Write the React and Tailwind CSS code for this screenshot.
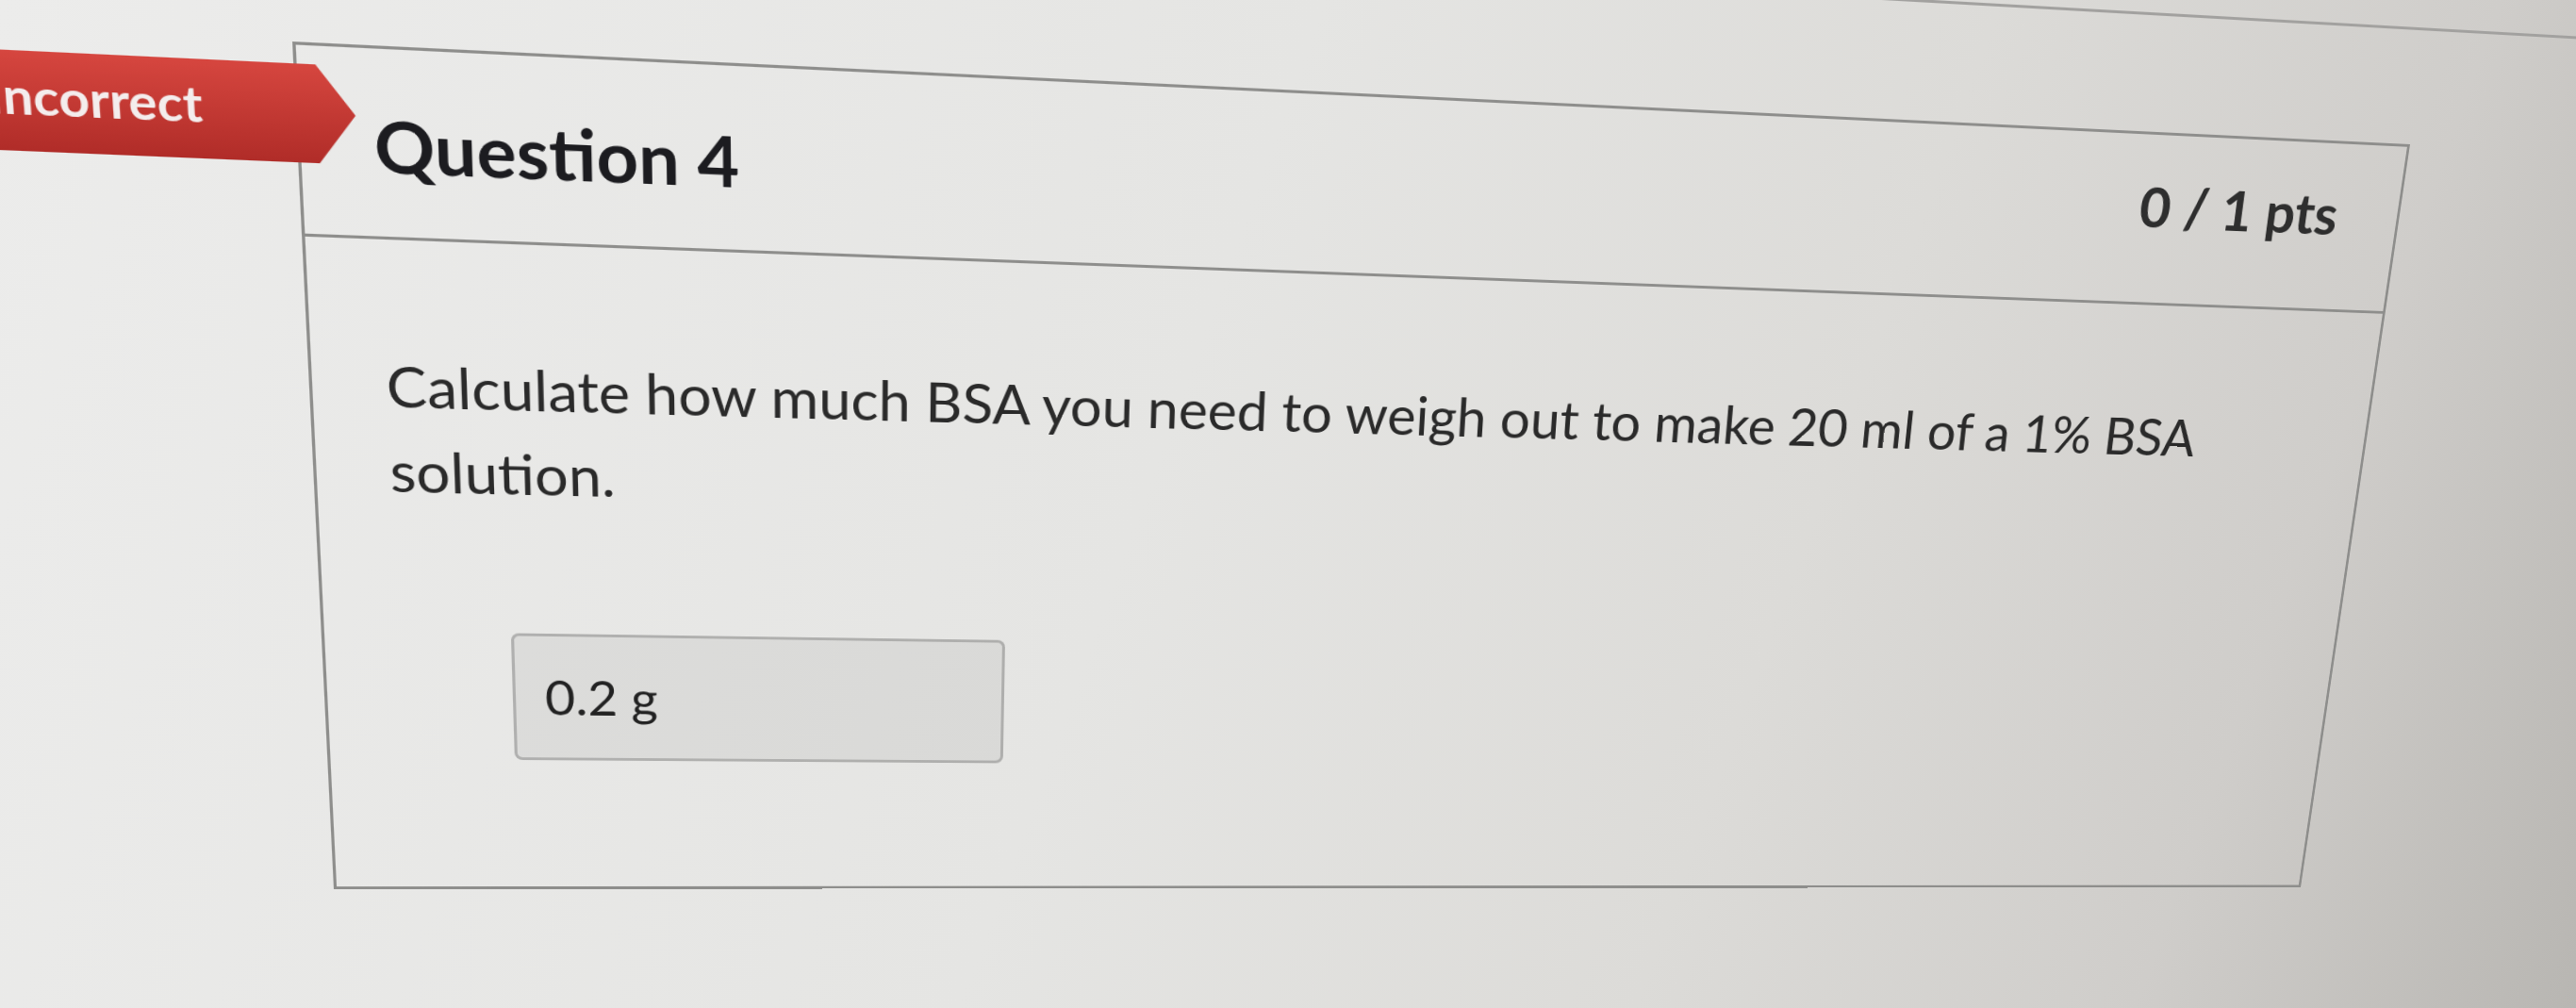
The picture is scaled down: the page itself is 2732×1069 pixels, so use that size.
// Quiz result card for a single question, seen through a phone camera
// (the whole sheet is projected with a matrix3d so it sits at the same angle).

const question = {
  number: 4,
  score: '0 / 1 pts',
  status: 'Incorrect',
  text: 'Calculate how much BSA you need to weigh out to make 20 ml of a 1% BSA solution.',
  answer: '0.2 g',
};

function StatusFlag({ label }) {
  return (
    <div className="absolute left-[-423px] top-[18px] flex h-[96px] w-[475px] items-center justify-end bg-gradient-to-b from-[#d6463f] to-[#b02c28] pb-[10px] pr-[140px] [clip-path:polygon(0_0,calc(100%_-_35px)_0,100%_50%,calc(100%_-_35px)_100%,0_100%)]">
      <span className="text-[48px] font-bold leading-[1.2] text-[#f4eded]">{label}</span>
    </div>
  );
}

function QuestionCard({ q }) {
  return (
    <div className="relative h-[880px] w-[2200px] border-[3px] border-[#8e8e8c]">
      <StatusFlag label={q.status} />

      <div className="flex h-[187px] items-start justify-between border-b-[3px] border-[#8e8e8c] pl-[68px] pr-[70px]">
        <h2 className="mt-[52px] text-[70px] font-bold leading-[1.2] text-[#1c1c20]">Question {q.number}</h2>
        <div className="mt-[40px] text-[62px] font-bold leading-[1.2] text-[#2e2e2e]">{q.score}</div>
      </div>

      <div className="px-[70px] pt-[104px]">
        <p className="text-[58px] leading-[88px] text-[#2a2a2a]">{q.text}</p>
        <div className="ml-[112px] mt-[126px] flex h-[139px] w-[502px] items-center rounded-[8px] border-[3px] border-black/20 bg-black/[0.05] pl-[29px]">
          <span className="text-[52px] leading-[1.2] text-[#222]">{q.answer}</span>
        </div>
      </div>
    </div>
  );
}

export default function App() {
  return (
    <div className="relative h-[1069px] w-[2732px] overflow-hidden bg-[linear-gradient(110deg,#ececeb_0%,#e5e5e3_45%,#dcdbd8_68%,#cfcdca_85%,#b8b6b2_100%)] font-[Lato,sans-serif]">
      <div className="w-[2200px] origin-top-left [transform:matrix3d(1.18482,0.059359,0,0.000064127,0.084011,1.112193,0,0.000096075,0,0,1,0,310,44,0,1)_translateY(-160px)]">
        {/* bottom edge of the previous block */}
        <div className="ml-[-400px] h-[36px] w-[3200px] border-b-[3px] border-[#a2a19f]" />
        <div className="mt-[124px]">
          <QuestionCard q={question} />
        </div>
      </div>
    </div>
  );
}
